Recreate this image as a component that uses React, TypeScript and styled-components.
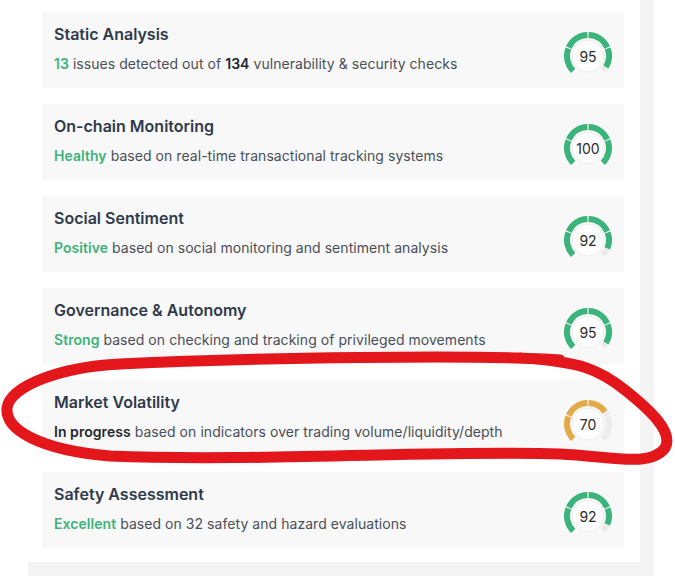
import styled, { createGlobalStyle } from "styled-components";

const GlobalStyle = createGlobalStyle`
  html, body {
    margin: 0;
    padding: 0;
    background: #ffffff;
    font-family: Inter, "Noto Sans", "Liberation Sans", sans-serif;
  }
`;

const Page = styled.div`
  position: relative;
  width: 675px;
  height: 576px;
  overflow: hidden;
`;

const Frame = styled.div`
  margin-left: 28px;
  width: 612px;
  background: #f4f4f5;
  padding: 0 14px 14px 0;
`;

const Panel = styled.div`
  background: #ffffff;
  padding: 12px 16px 14px 14px;
  display: flex;
  flex-direction: column;
  gap: 16px;
`;

const Card = styled.div`
  height: 76px;
  box-sizing: border-box;
  background: #f8f8f8;
  border-radius: 2px;
  padding: 12px 12px 0 12px;
  display: flex;
  justify-content: space-between;
  align-items: flex-start;
`;

const Texts = styled.div`
  display: flex;
  flex-direction: column;
`;

const Title = styled.div`
  font-size: 16px;
  line-height: 20px;
  font-weight: 600;
  color: #2f3a4a;
`;

const Desc = styled.div`
  margin-top: 10px;
  font-size: 14px;
  line-height: 20px;
  color: #4a4f57;
  letter-spacing: 0.05px;
`;

const Mark = styled.span<{ $tone: "green" | "dark" }>`
  font-weight: 600;
  color: ${p => (p.$tone === "green" ? "#3db37a" : "#23272e")};
`;

const GaugeBox = styled.div`
  position: relative;
  width: 48px;
  height: 48px;
  margin-top: 8px;
`;

const GaugeValue = styled.div`
  position: absolute;
  inset: 0;
  display: flex;
  align-items: center;
  justify-content: center;
  font-size: 14px;
  color: #2b2b2b;
`;

const Annotation = styled.svg`
  position: absolute;
  left: 0;
  top: 0;
  pointer-events: none;
`;

const CX = 24;
const CY = 24;
const R = 21;

function pt(a: number) {
  const rad = (a * Math.PI) / 180;
  return `${(CX + R * Math.sin(rad)).toFixed(2)} ${(CY - R * Math.cos(rad)).toFixed(2)}`;
}

function arc(a0: number, a1: number) {
  const large = a1 - a0 > 180 ? 1 : 0;
  return `M ${pt(a0)} A ${R} ${R} 0 ${large} 1 ${pt(a1)}`;
}

const SEGMENTS = [
  [-135, -67.5],
  [-67.5, 0],
  [0, 67.5],
  [67.5, 135],
];

function Gauge({ value, color }: { value: number; color: string }) {
  const end = -135 + (270 * value) / 100;
  const gap = 1.6;
  return (
    <GaugeBox>
      <svg width="48" height="48" viewBox="0 0 48 48">
        <circle cx={CX} cy={CY} r={16} fill="#fdfdfd" stroke="#ededed" strokeWidth="1" />
        {SEGMENTS.map(([a, b], i) => (
          <path
            key={"t" + i}
            d={arc(a + (i ? gap : 0), b - (i < 3 ? gap : 0))}
            stroke="#ececec"
            strokeWidth="6"
            fill="none"
          />
        ))}
        {SEGMENTS.map(([a, b], i) => {
          const s = a + (i ? gap : 0);
          const e = Math.min(b - (i < 3 ? gap : 0), end);
          if (e <= s) return null;
          return <path key={"f" + i} d={arc(s, e)} stroke={color} strokeWidth="6" fill="none" />;
        })}
      </svg>
      <GaugeValue>{value}</GaugeValue>
    </GaugeBox>
  );
}

const GREEN = "#3bb47c";
const YELLOW = "#e2aa48";

export default function App() {
  return (
    <Page>
      <GlobalStyle />
      <Frame>
        <Panel>
          <Card>
            <Texts>
              <Title>Static Analysis</Title>
              <Desc>
                <Mark $tone="green">13</Mark> issues detected out of <Mark $tone="dark">134</Mark> vulnerability &amp; security checks
              </Desc>
            </Texts>
            <Gauge value={95} color={GREEN} />
          </Card>
          <Card>
            <Texts>
              <Title>On-chain Monitoring</Title>
              <Desc>
                <Mark $tone="green">Healthy</Mark> based on real-time transactional tracking systems
              </Desc>
            </Texts>
            <Gauge value={100} color={GREEN} />
          </Card>
          <Card>
            <Texts>
              <Title>Social Sentiment</Title>
              <Desc>
                <Mark $tone="green">Positive</Mark> based on social monitoring and sentiment analysis
              </Desc>
            </Texts>
            <Gauge value={92} color={GREEN} />
          </Card>
          <Card>
            <Texts>
              <Title>Governance &amp; Autonomy</Title>
              <Desc>
                <Mark $tone="green">Strong</Mark> based on checking and tracking of privileged movements
              </Desc>
            </Texts>
            <Gauge value={95} color={GREEN} />
          </Card>
          <Card>
            <Texts>
              <Title>Market Volatility</Title>
              <Desc>
                <Mark $tone="dark">In progress</Mark> based on indicators over trading volume/liquidity/depth
              </Desc>
            </Texts>
            <Gauge value={70} color={YELLOW} />
          </Card>
          <Card>
            <Texts>
              <Title>Safety Assessment</Title>
              <Desc>
                <Mark $tone="green">Excellent</Mark> based on 32 safety and hazard evaluations
              </Desc>
            </Texts>
            <Gauge value={92} color={GREEN} />
          </Card>
        </Panel>
      </Frame>
      <Annotation width="675" height="576" viewBox="0 0 675 576">
        <path
          d="M 560 360 C 480 354, 250 358, 120 364 C 60 367, 10 386, 7 408 C 5 430, 40 450, 110 456 C 250 462, 450 450, 560 454 C 610 456, 650 468, 665 448 C 674 432, 650 410, 625 390 C 600 370, 580 361, 520 358"
          stroke="#e3161b"
          strokeWidth="11"
          strokeLinecap="round"
          strokeLinejoin="round"
          fill="none"
        />
      </Annotation>
    </Page>
  );
}
